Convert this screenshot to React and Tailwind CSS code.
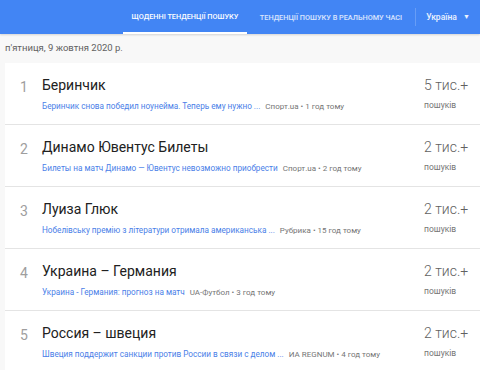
import React from 'react';

const items = [
  {
    n: 1,
    title: 'Беринчик',
    link: 'Беринчик снова победил ноунейма. Теперь ему нужно ...',
    source: 'Спорт.ua • 1 год тому',
    count: '5 тис.+',
  },
  {
    n: 2,
    title: 'Динамо Ювентус Билеты',
    link: 'Билеты на матч Динамо — Ювентус невозможно приобрести',
    source: 'Спорт.ua • 2 год тому',
    count: '2 тис.+',
  },
  {
    n: 3,
    title: 'Луиза Глюк',
    link: 'Нобелівську премію з літератури отримала американська ...',
    source: 'Рубрика • 15 год тому',
    count: '2 тис.+',
  },
  {
    n: 4,
    title: 'Украина – Германия',
    link: 'Украина - Германия: прогноз на матч',
    source: 'UA-Футбол • 3 год тому',
    count: '2 тис.+',
  },
  {
    n: 5,
    title: 'Россия – швеция',
    link: 'Швеция поддержит санкции против России в связи с делом ...',
    source: 'ИА REGNUM • 4 год тому',
    count: '2 тис.+',
  },
];

const App = () => {
  return (
    <div className="w-[480px] h-[370px] overflow-hidden bg-[#f8f8f8] font-['Roboto',sans-serif]">
      <div className="h-[34px] bg-[#4285f4] flex items-stretch text-white text-[7.3px] font-medium uppercase shadow-[0_1px_2px_rgba(0,0,0,0.15)]">
        <div className="w-[123px]" />
        <div className="w-[124px] flex items-center justify-center border-b-2 border-white pt-[2px]">Щоденні тенденції пошуку</div>
        <div className="w-[168px] flex items-center justify-center text-white/80 pt-[2px]">Тенденції пошуку в реальному часі</div>
        <div className="flex items-center">
          <div className="w-px h-[18px] bg-white/20" />
        </div>
        <div className="flex-1 flex items-center justify-center gap-[6px] normal-case text-[8.5px] text-white/90">
          <span>Україна</span>
          <span className="text-[7px]">▼</span>
        </div>
      </div>

      <div className="px-[5px] pt-[7px] pb-[8px] text-[9.5px] text-[#616161]">п'ятниця, 9 жовтня 2020 р.</div>

      <div className="ml-[5px] flex flex-col gap-[1px] bg-[#e4e4e4]">
        {items.map((it) => (
          <div key={it.n} className="h-[61px] bg-white flex items-center">
            <div className="w-[37px] pl-[15px] text-[14px] text-[#9e9e9e] self-start pt-[14px]">{it.n}</div>
            <div className="flex-1 min-w-0 self-start pt-[13px]">
              <div className="text-[14px] text-[#212121] leading-[18px]">{it.title}</div>
              <div className="mt-[6px] text-[8.2px] leading-[12px] whitespace-nowrap">
                <span className="text-[#4a80e8]">{it.link}</span>
                <span className="text-[8px] text-[#757575] ml-[5px]">{it.source}</span>
              </div>
            </div>
            <div className="w-[56px] self-start pt-[12px]">
              <div className="text-[14px] font-light text-[#616161] leading-[20px]">{it.count}</div>
              <div className="mt-[4px] text-[8.5px] text-[#757575] leading-[12px]">пошуків</div>
            </div>
          </div>
        ))}
      </div>
    </div>
  );
};

export default App;
